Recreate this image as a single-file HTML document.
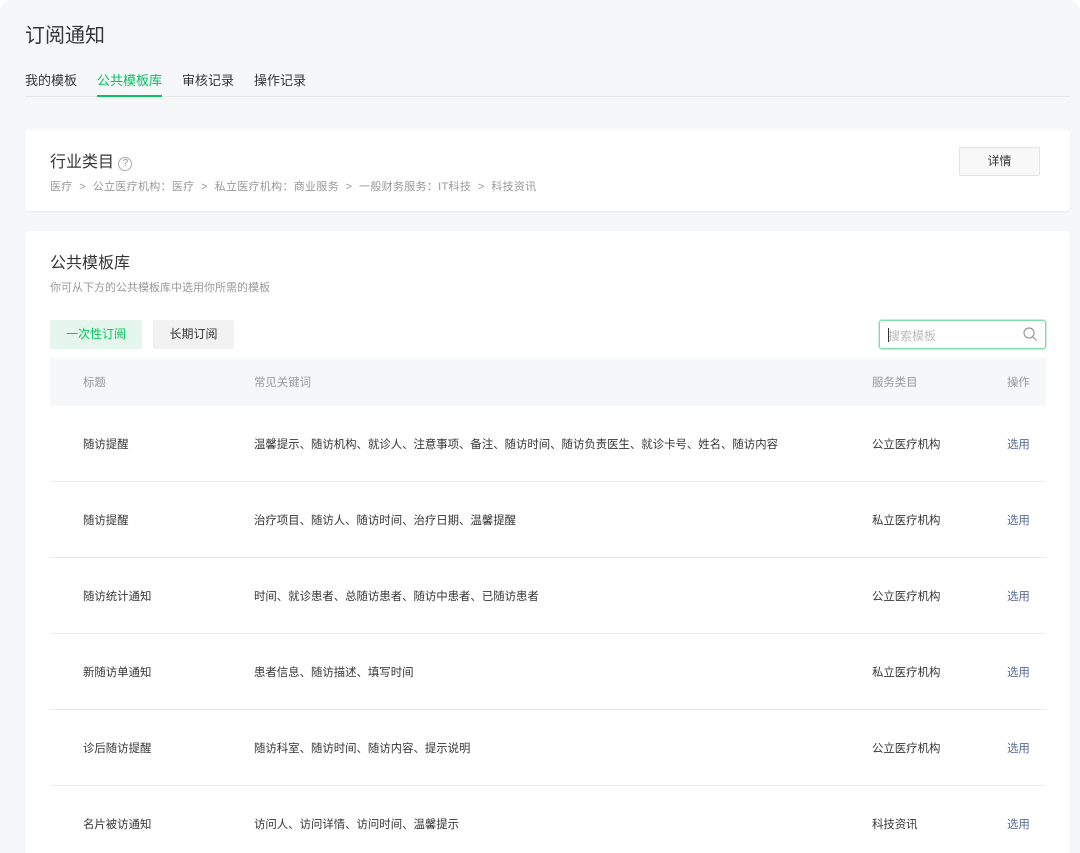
<!DOCTYPE html><html><head><meta charset="utf-8"><style>
*{margin:0;padding:0;box-sizing:border-box}
html,body{width:1080px;height:853px;overflow:hidden}
body{background:#fff;font-family:"Liberation Sans","Noto Sans CJK SC",sans-serif;color:#353535;position:relative}
.page{position:absolute;left:0;top:0;width:1080px;height:853px;background:#f6f7f9;border-radius:12px 12px 0 0;overflow:hidden}
.abs{position:absolute;white-space:nowrap}
.card{position:absolute;background:#fff;border-radius:4px;box-shadow:0 1px 2px rgba(0,0,0,.06)}
.row{position:absolute;left:50px;width:996px;height:76px;border-bottom:1px solid #ececec;font-size:11.4px;color:#353535}
.row span{position:absolute;top:30px}
</style></head><body><div class="page">
<div class="abs" style="left:25px;top:19px;font-size:20px;color:#353535">订阅通知</div>
<div class="abs" style="left:25px;top:70px;font-size:13px;color:#353535">我的模板</div>
<div class="abs" style="left:97px;top:70px;font-size:13px;color:#07c160">公共模板库</div>
<div class="abs" style="left:182px;top:70px;font-size:13px">审核记录</div>
<div class="abs" style="left:254px;top:70px;font-size:13px">操作记录</div>
<div class="abs" style="left:25px;top:96px;width:1045px;height:1px;background:#e5e5e5"></div>
<div class="abs" style="left:97px;top:95px;width:65px;height:2px;background:#07c160"></div>

<div class="card" style="left:25px;top:130px;width:1045px;height:81px">
<div class="abs" style="left:25px;top:18px;font-size:16px">行业类目 <span style="display:inline-block;width:14px;height:14px;border:1px solid #aaa;border-radius:50%;font-size:10px;color:#999;text-align:center;line-height:12px;vertical-align:1px">?</span></div>
<div class="abs" style="left:25px;top:48px;font-size:11px;color:#999;letter-spacing:0.3px">医疗 &nbsp;&gt;&nbsp; 公立医疗机构：医疗 &nbsp;&gt;&nbsp; 私立医疗机构：商业服务 &nbsp;&gt;&nbsp; 一般财务服务：IT科技 &nbsp;&gt;&nbsp; 科技资讯</div>
<div class="abs" style="left:934px;top:17px;width:81px;height:29px;border:1px solid #e4e4e4;background:#f8f8f8;border-radius:2px;font-size:12px;text-align:center;line-height:27px">详情</div>
</div>

<div class="card" style="left:25px;top:231px;width:1045px;height:640px"></div>
<div class="abs" style="left:50px;top:249px;font-size:16px">公共模板库</div>
<div class="abs" style="left:50px;top:279px;font-size:11px;color:#999">你可从下方的公共模板库中选用你所需的模板</div>
<div class="abs" style="left:50px;top:320px;width:92px;height:29px;background:#e5f7ec;color:#07c160;font-size:12px;text-align:center;line-height:29px;border-radius:2px">一次性订阅</div>
<div class="abs" style="left:153px;top:320px;width:81px;height:29px;background:#f2f2f2;font-size:12px;text-align:center;line-height:29px;border-radius:2px">长期订阅</div>
<div class="abs" style="left:879px;top:320px;width:167px;height:29px;border:1px solid #7fdca6;border-radius:3px;box-shadow:0 0 0 1px #c8f0d8"><span style="position:absolute;left:8px;top:6px;font-size:12px;color:#bbb">搜索模板</span><span style="position:absolute;left:8px;top:7px;width:1px;height:14px;background:#333"></span>
<svg style="position:absolute;right:7px;top:6px" width="15" height="15" viewBox="0 0 15 15"><circle cx="6" cy="6" r="5" fill="none" stroke="#999" stroke-width="1.2"/><path d="M9.7 9.7L13.5 13.5" stroke="#999" stroke-width="1.2"/></svg></div>
<div class="abs" style="left:50px;top:358px;width:996px;height:48px;background:#f6f7f9;font-size:11.4px;color:#999">
<span style="position:absolute;left:33px;top:16px">标题</span><span style="position:absolute;left:204px;top:16px">常见关键词</span><span style="position:absolute;left:822px;top:16px">服务类目</span><span style="position:absolute;left:957px;top:16px">操作</span></div>
<div class="row" style="top:406px"><span style="left:33px">随访提醒</span><span style="left:204px">温馨提示、随访机构、就诊人、注意事项、备注、随访时间、随访负责医生、就诊卡号、姓名、随访内容</span><span style="left:822px">公立医疗机构</span><span style="left:957px;color:#576b95">选用</span></div>
<div class="row" style="top:482px"><span style="left:33px">随访提醒</span><span style="left:204px">治疗项目、随访人、随访时间、治疗日期、温馨提醒</span><span style="left:822px">私立医疗机构</span><span style="left:957px;color:#576b95">选用</span></div>
<div class="row" style="top:558px"><span style="left:33px">随访统计通知</span><span style="left:204px">时间、就诊患者、总随访患者、随访中患者、已随访患者</span><span style="left:822px">公立医疗机构</span><span style="left:957px;color:#576b95">选用</span></div>
<div class="row" style="top:634px"><span style="left:33px">新随访单通知</span><span style="left:204px">患者信息、随访描述、填写时间</span><span style="left:822px">私立医疗机构</span><span style="left:957px;color:#576b95">选用</span></div>
<div class="row" style="top:710px"><span style="left:33px">诊后随访提醒</span><span style="left:204px">随访科室、随访时间、随访内容、提示说明</span><span style="left:822px">公立医疗机构</span><span style="left:957px;color:#576b95">选用</span></div>
<div class="row" style="top:786px"><span style="left:33px">名片被访通知</span><span style="left:204px">访问人、访问详情、访问时间、温馨提示</span><span style="left:822px">科技资讯</span><span style="left:957px;color:#576b95">选用</span></div>
</div></body></html>
